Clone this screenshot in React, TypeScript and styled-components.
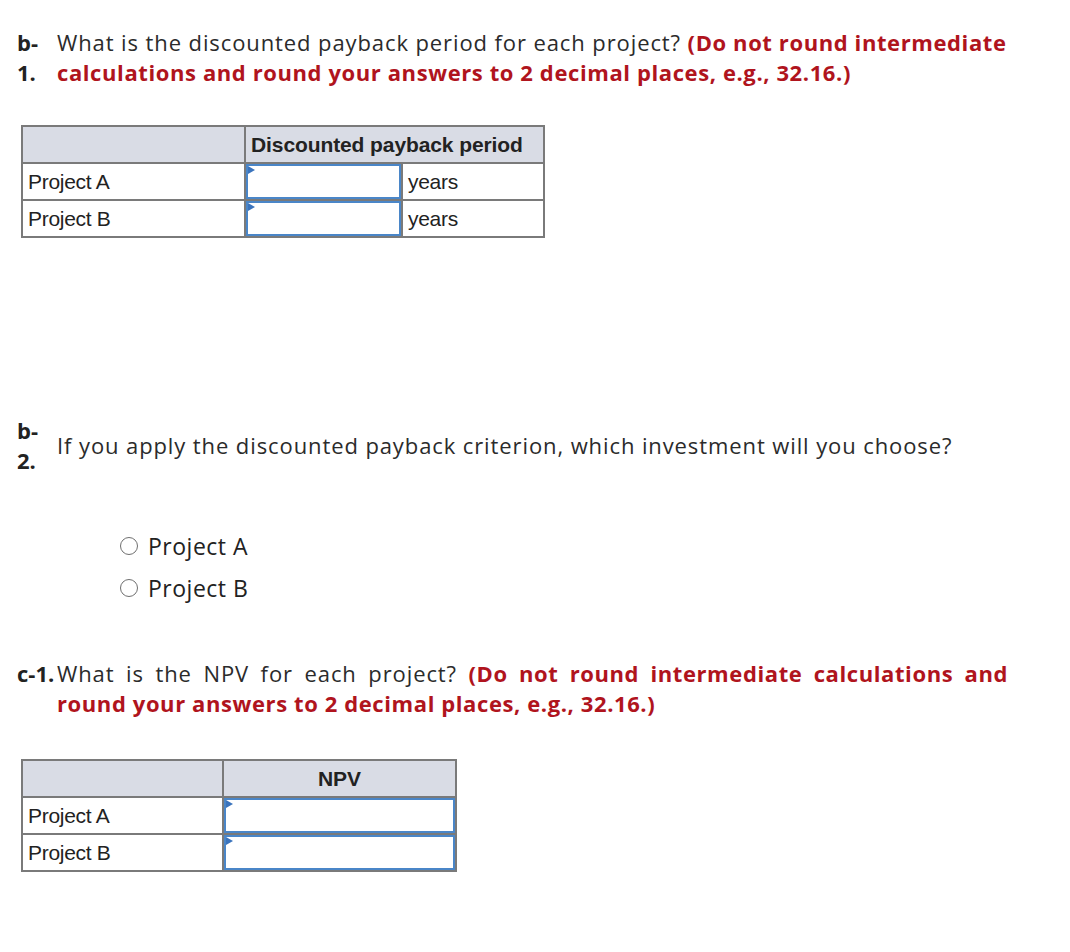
import React from "react";
import styled, { createGlobalStyle } from "styled-components";

const Global = createGlobalStyle`
  html, body { margin: 0; padding: 0; background: #ffffff; }
  body { font-family: "Open Sans", "Liberation Sans", sans-serif; color: #2b2b2b; }
`;

const Page = styled.div`
  padding: 27px 0 40px 17px;
  width: 1008px;
  box-sizing: border-box;
`;

const Question = styled.div<{ $center?: boolean; $mt?: number }>`
  display: flex;
  align-items: ${(p) => (p.$center ? "center" : "flex-start")};
  margin-top: ${(p) => p.$mt ?? 0}px;
  font-size: 22px;
  line-height: 30px;
  letter-spacing: 0.9px;
`;

const Label = styled.div<{ $w?: number }>`
  width: ${(p) => p.$w ?? 40}px;
  flex: none;
  font-weight: 700;
  color: #222;
  letter-spacing: 0;
  white-space: pre-line;
`;

const Body = styled.div<{ $justify?: boolean }>`
  flex: 1;
  color: #2b2b2b;
  white-space: ${(p) => (p.$justify ? "normal" : "nowrap")};
  text-align: ${(p) => (p.$justify ? "justify" : "left")};
`;

const Red = styled.span`
  color: #b0141d;
  font-weight: 700;
  letter-spacing: 0.6px;
`;

const Table = styled.table<{ $mt: number; $w: number }>`
  margin-top: ${(p) => p.$mt}px;
  margin-left: 4px;
  width: ${(p) => p.$w}px;
  border-collapse: collapse;
  table-layout: fixed;
  font-family: "Liberation Sans", Arial, sans-serif;
  font-size: 21px;
  color: #222;
`;

const Th = styled.th<{ $align?: string }>`
  background: #d9dce5;
  border: 2px solid #7a7a7a;
  height: 35px;
  padding: 0 5px;
  text-align: ${(p) => p.$align ?? "left"};
  font-weight: 700;
  letter-spacing: -0.1px;
`;

const Td = styled.td`
  border: 2px solid #7a7a7a;
  height: 35px;
  padding: 0 5px;
  letter-spacing: -0.3px;
`;

const InputTd = styled.td`
  border: 2px solid #7a7a7a;
  height: 35px;
  padding: 0;
`;

const InputBox = styled.div`
  position: relative;
  height: 35px;
  box-sizing: border-box;
  border: 2px solid #4a86c8;
  background: #fff;
`;

const Flag = styled.span`
  position: absolute;
  left: 0;
  top: 0;
  width: 0;
  height: 0;
  border-top: 4px solid transparent;
  border-bottom: 4px solid transparent;
  border-left: 7px solid #3b74bd;
`;

const Options = styled.div`
  margin-top: 50px;
  margin-left: 103px;
  display: flex;
  flex-direction: column;
`;

const Option = styled.label`
  display: flex;
  align-items: center;
  height: 42px;
  font-size: 23px;
  letter-spacing: 0.5px;
  color: #222;
`;

const Radio = styled.span`
  width: 18px;
  height: 18px;
  border-radius: 50%;
  border: 1.5px solid #6f6f6f;
  box-sizing: border-box;
  margin-right: 10px;
  background: #fff;
`;

const Field = () => (
  <InputBox>
    <Flag />
  </InputBox>
);

export default function App() {
  return (
    <>
      <Global />
      <Page>
        <Question>
          <Label>{"b-\n1."}</Label>
          <Body>
            What is the discounted payback period for each project? <Red>(Do not round intermediate</Red>
            <br />
            <Red>calculations and round your answers to 2 decimal places, e.g., 32.16.)</Red>
          </Body>
        </Question>

        <Table $mt={38} $w={522}>
          <colgroup>
            <col style={{ width: 223 }} />
            <col style={{ width: 157 }} />
            <col style={{ width: 142 }} />
          </colgroup>
          <thead>
            <tr>
              <Th />
              <Th colSpan={2}>Discounted payback period</Th>
            </tr>
          </thead>
          <tbody>
            {["Project A", "Project B"].map((p) => (
              <tr key={p}>
                <Td>{p}</Td>
                <InputTd>
                  <Field />
                </InputTd>
                <Td>years</Td>
              </tr>
            ))}
          </tbody>
        </Table>

        <Question $center $mt={177}>
          <Label>{"b-\n2."}</Label>
          <Body>If you apply the discounted payback criterion, which investment will you choose?</Body>
        </Question>

        <Options>
          <Option>
            <Radio />
            Project A
          </Option>
          <Option>
            <Radio />
            Project B
          </Option>
        </Options>

        <Question $mt={49}>
          <Label>c-1.</Label>
          <Body $justify>
            What is the NPV for each project?{" "}
            <Red>
              (Do not round intermediate calculations and round your answers to 2 decimal places, e.g., 32.16.)
            </Red>
          </Body>
        </Question>

        <Table $mt={41} $w={434}>
          <colgroup>
            <col style={{ width: 201 }} />
            <col style={{ width: 233 }} />
          </colgroup>
          <thead>
            <tr>
              <Th />
              <Th $align="center">NPV</Th>
            </tr>
          </thead>
          <tbody>
            {["Project A", "Project B"].map((p) => (
              <tr key={p}>
                <Td>{p}</Td>
                <InputTd>
                  <Field />
                </InputTd>
              </tr>
            ))}
          </tbody>
        </Table>
      </Page>
    </>
  );
}
